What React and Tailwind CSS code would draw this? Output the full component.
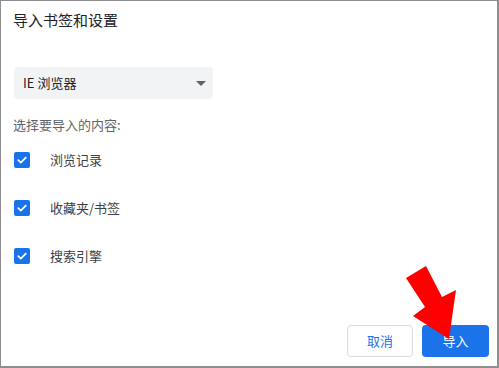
import React from "react";

const font = { fontFamily: '"Noto Sans CJK SC", "Noto Sans", sans-serif' };

function Check() {
  return (
    <div className="w-4 h-4 rounded-[2px] bg-[#1a73e8] flex items-center justify-center shrink-0">
      <svg width="12" height="12" viewBox="0 0 12 12">
        <path d="M2.3 6.2 L4.8 8.6 L9.8 3.6" fill="none" stroke="white" strokeWidth="1.8" strokeLinecap="round" strokeLinejoin="round" />
      </svg>
    </div>
  );
}

function Row({ label }) {
  return (
    <div className="flex items-center h-6">
      <div className="ml-[1px]"><Check /></div>
      <span className="ml-[20px] text-[13px] text-[#3c4043]">{label}</span>
    </div>
  );
}

export default function App() {
  return (
    <div
      className="relative w-[499px] h-[368px] bg-white border-l border-t border-r-2 border-b-2 border-[#8e8e8e] flex flex-col pl-[12px] pr-[8px] pt-[9px] pb-[9px] overflow-hidden"
      style={font}
    >
      <div className="text-[15px] leading-5 text-[#202124]">导入书签和设置</div>
      <div className="mt-[37px] ml-[1px] w-[199px] h-8 rounded bg-[#f1f3f4] flex items-center justify-between pl-[9px] pr-[7px]">
        <span className="text-[13px] text-[#202124]">IE 浏览器</span>
        <svg width="10" height="5" viewBox="0 0 10 5"><path d="M0 0 L10 0 L5 5 Z" fill="#5f6368" /></svg>
      </div>
      <div className="mt-[17px] text-[13px] leading-[18px] text-[#5f6368]">选择要导入的内容:</div>
      <div className="mt-[14px] flex flex-col gap-6">
        <Row label="浏览记录" />
        <Row label="收藏夹/书签" />
        <Row label="搜索引擎" />
      </div>
      <div className="mt-auto flex justify-end gap-[9px]">
        <button className="w-[66px] h-8 rounded border border-[#dadce0] bg-white text-[13px] text-[#1a73e8]">取消</button>
        <button className="w-[67px] h-8 rounded bg-[#1a73e8] text-[13px] text-white">导入</button>
      </div>
      <svg className="absolute left-0 top-0 pointer-events-none" width="499" height="368" viewBox="0 0 499 368">
        <polygon points="405,277 425,265 441,296 455,289 448,338 412,315 424,306" fill="#ff0000" />
      </svg>
    </div>
  );
}
